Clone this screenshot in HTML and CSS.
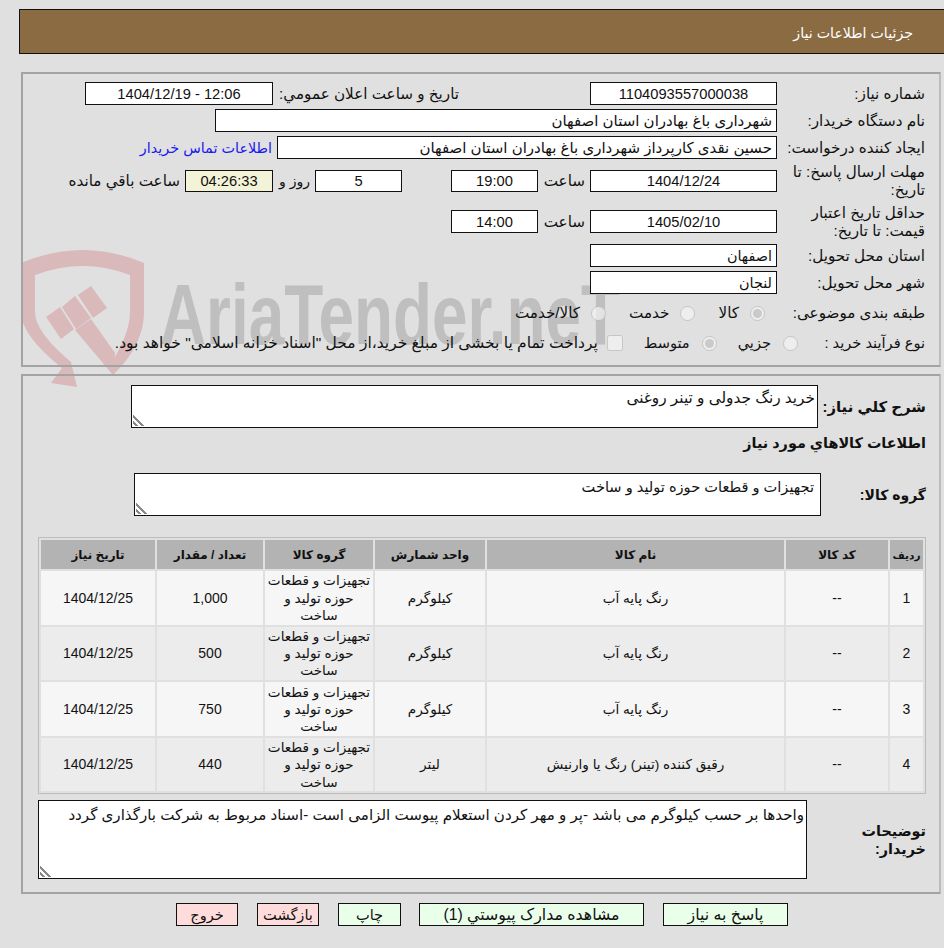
FILE: index.html
```html
<!DOCTYPE html>
<html lang="fa" dir="rtl">
<head>
<meta charset="utf-8">
<title>جزئیات اطلاعات نیاز</title>
<link rel="stylesheet" href="styles.css">
</head>
<body>
<svg class="watermark" width="944" height="400" viewBox="0 0 944 400" aria-hidden="true">
  <g class="wm-shield">
    <path d="M21 263Q83 237 144 263V312Q144 345 113 375L108 368Q130 335 130 312V275Q83 257 35 275V312Q35 332 71 362L77 387L51 383L62 368Q21 335 21 312Z"/>
    <path d="M75 330L91 319L115 353L113 375Z"/>
    <path d="M46 317L60 307L74 329L61 339Z"/>
    <path d="M62 307L75 296L91 318L76 329Z"/>
    <path d="M78 295L91 286L107 308L93 318Z"/>
  </g>
  <text class="wm-text" x="160" y="344" textLength="460" lengthAdjust="spacingAndGlyphs" direction="ltr">AriaTender.neT</text>
</svg>

<header class="page-title">جزئیات اطلاعات نیاز</header>

<section class="panel panel-info">
  <div class="row">
    <label class="lbl">شماره نیاز:</label>
    <input class="field f187 center num" readonly value="1104093557000038">
    <span class="lbl-inline announce">تاریخ و ساعت اعلان عمومي:</span>
    <input class="field f188 center num" dir="ltr" readonly value="1404/12/19 - 12:06">
  </div>
  <div class="row">
    <label class="lbl">نام دستگاه خریدار:</label>
    <input class="field f562" readonly value="شهرداری باغ بهادران استان اصفهان">
  </div>
  <div class="row">
    <label class="lbl">ایجاد کننده درخواست:</label>
    <input class="field f500" readonly value="حسین نقدی کارپرداز شهرداری باغ بهادران استان اصفهان">
    <a class="contact" href="#">اطلاعات تماس خریدار</a>
  </div>
  <div class="row row-tall first">
    <label class="lbl">مهلت ارسال پاسخ: تا تاریخ:</label>
    <input class="field f187 center short num" readonly value="1404/12/24">
    <span class="lbl-inline hour">ساعت</span>
    <input class="field f87 center short num" readonly value="19:00">
    <input class="field f87 center short days num" readonly value="5">
    <span class="lbl-inline dayword">روز و</span>
    <input class="field timer center short num" readonly value="04:26:33">
    <span class="lbl-inline remain">ساعت باقي مانده</span>
  </div>
  <div class="row row-tall">
    <label class="lbl">حداقل تاریخ اعتبار قیمت: تا تاریخ:</label>
    <input class="field f187 center num" readonly value="1405/02/10">
    <span class="lbl-inline hour">ساعت</span>
    <input class="field f87 center num" readonly value="14:00">
  </div>
  <div class="row">
    <label class="lbl">استان محل تحویل:</label>
    <input class="field f187 place" readonly value="اصفهان">
  </div>
  <div class="row">
    <label class="lbl">شهر محل تحویل:</label>
    <input class="field f187 place" readonly value="لنجان">
  </div>
  <div class="row row-opt cat">
    <label class="lbl">طبقه بندی موضوعی:</label>
    <input class="radio" type="radio" name="cat" disabled checked>
    <span class="opt">کالا</span>
    <input class="radio" type="radio" name="cat" disabled>
    <span class="opt">خدمت</span>
    <input class="radio" type="radio" name="cat" disabled>
    <span class="opt">کالا/خدمت</span>
  </div>
  <div class="row row-opt proc">
    <label class="lbl">نوع فرآیند خرید :</label>
    <input class="radio" type="radio" name="proc" disabled>
    <span class="opt">جزیي</span>
    <input class="radio" type="radio" name="proc" disabled checked>
    <span class="opt">متوسط</span>
    <input class="check" type="checkbox" disabled>
    <span class="opt pay">پرداخت تمام یا بخشی از مبلغ خرید،از محل "اسناد خزانه اسلامی" خواهد بود.</span>
  </div>
</section>

<section class="panel panel-goods">
  <div class="desc-row">
    <h3 class="head head-desc">شرح کلي نیاز:</h3>
    <textarea class="area area-desc" readonly>خرید رنگ جدولی و تینر روغنی</textarea>
  </div>
  <h3 class="head head-goods">اطلاعات کالاهاي مورد نیاز</h3>
  <div class="group-row">
    <h3 class="head head-group">گروه کالا:</h3>
    <textarea class="area area-group" readonly>تجهیزات و قطعات حوزه تولید و ساخت</textarea>
  </div>
  <table class="goods">
    <colgroup>
      <col class="c1"><col class="c2"><col class="c3"><col class="c4"><col class="c5"><col class="c6"><col class="c7">
    </colgroup>
    <thead>
      <tr><th>ردیف</th><th>کد کالا</th><th>نام کالا</th><th>واحد شمارش</th><th>گروه کالا</th><th>تعداد / مقدار</th><th>تاریخ نیاز</th></tr>
    </thead>
    <tbody>
      <tr><td>1</td><td>--</td><td>رنگ پایه آب</td><td>کیلوگرم</td><td>تجهیزات و قطعات حوزه تولید و ساخت</td><td>1,000</td><td>1404/12/25</td></tr>
      <tr><td>2</td><td>--</td><td>رنگ پایه آب</td><td>کیلوگرم</td><td>تجهیزات و قطعات حوزه تولید و ساخت</td><td>500</td><td>1404/12/25</td></tr>
      <tr><td>3</td><td>--</td><td>رنگ پایه آب</td><td>کیلوگرم</td><td>تجهیزات و قطعات حوزه تولید و ساخت</td><td>750</td><td>1404/12/25</td></tr>
      <tr><td>4</td><td>--</td><td>رقیق کننده (تینر) رنگ یا وارنیش</td><td>لیتر</td><td>تجهیزات و قطعات حوزه تولید و ساخت</td><td>440</td><td>1404/12/25</td></tr>
    </tbody>
  </table>
  <div class="notes-row">
    <h3 class="head head-notes">توضیحات خریدار:</h3>
    <textarea class="area area-notes" readonly>واحدها بر حسب کیلوگرم می باشد -پر و مهر کردن استعلام پیوست الزامی است -اسناد مربوط به شرکت بارگذاری گردد</textarea>
  </div>
</section>

<nav class="actions">
  <button class="btn ok b-reply">پاسخ به نیاز</button>
  <button class="btn ok b-docs">مشاهده مدارک پیوستي (1)</button>
  <button class="btn ok b-print">چاپ</button>
  <button class="btn no b-back">بازگشت</button>
  <button class="btn no b-exit">خروج</button>
</nav>
</body>
</html>
```
FILE: styles.css
```css
* { box-sizing: border-box; }
html, body { height: 948px; overflow: hidden; }
body {
  margin: 0;
  position: relative;
  background: #e0e0e0;
  color: #111;
  font: 15.2px/18px "Liberation Sans", "DejaVu Sans", sans-serif;
}
.watermark { position: absolute; top: 0; left: 0; z-index: 0; pointer-events: none; }
.wm-shield { fill: #d9b9ba; }
.wm-text { fill: #bfbfbf; font: bold 86px "Liberation Sans", sans-serif; }

.page-title {
  height: 45px;
  margin: 9px -2px 0 19px;
  padding: 0 32px 0 0;
  background: #8b6b42;
  border: 1px solid #111;
  color: #fff;
  font-size: 14.2px;
  line-height: 46px;
}
.panel {
  position: relative;
  z-index: 1;
  margin: 0 3px 0 21px;
  border: 2px solid;
  border-color: #a3a3a3 #bcbcbc #a3a3a3 #a3a3a3;
}
.panel-info { height: 295px; margin-top: 18px; padding: 8px 14px 0 0; }
.panel-goods { height: 520px; margin-top: 7px; padding: 9px 13px 0 15px; }

.row { display: flex; align-items: center; height: 23px; margin-bottom: 4px; }
.row-tall { height: 37px; }
.row-tall.first { height: 36px; }
.row-opt { height: 30px; margin-bottom: 0; }
.lbl { flex: none; width: 148px; padding-left: 8px; }
.row-opt.proc .lbl { width: 127px; }
.field {
  flex: none;
  height: 23px;
  padding: 0 4px;
  border: 1px solid #111;
  border-radius: 0;
  outline: 0;
  background: #fff;
  color: #111;
  font: inherit;
  font-size: 15px;
}
.num { font-size: 14.7px; }
.place { font-size: 14.4px; }
.center { text-align: center; }
.short { height: 22px; }
.f187 { width: 187px; }
.f188 { width: 188px; }
.f87 { width: 87px; }
.f562 { width: 562px; }
.f500 { width: 500px; }
.lbl-inline { flex: none; }
.announce { margin: 0 131px 0 0; width: 186px; }
.hour { width: 47px; margin-right: 5px; }
.days { margin-right: 49px; }
.dayword { width: 42px; margin-right: 0; padding-right: 5px; font-size: 14px; }
.timer { width: 88px; background: #f3f3d8; }
.remain { margin-right: 5px; }
.contact { flex: none; margin-right: 5px; color: #1a1aee; font-size: 14.4px; text-decoration: none; }

.radio { flex: none; width: 15px; height: 15px; margin: 0 0 0 11px; }
.check { flex: none; width: 16px; height: 16px; margin: 0 0 0 9px; }
.opt { flex: none; }
.cat .lbl { margin-left: 12px; width: 148px; }
.cat .opt { margin-left: 23px; }
.proc .lbl { font-size: 14.6px; }
.proc .opt { margin-left: 21px; font-size: 14.6px; }
.proc .radio { margin-left: 12px; }
.proc .opt.pay { margin-left: 0; font-size: 15.5px; }

.head { margin: 0; font-size: 14.4px; font-weight: bold; line-height: 18px; flex: none; }
.desc-row, .group-row, .notes-row { display: flex; align-items: center; }
.area {
  display: block;
  flex: none;
  padding: 3px 2px 2px;
  border: 1px solid #111;
  border-radius: 0;
  outline: 0;
  background: #fff;
  color: #111;
  font: inherit;
}
.area::-webkit-resizer {
  background: linear-gradient(45deg, transparent 0 12%, #888 12% 24%, transparent 24% 40%, #888 40% 52%, transparent 52%) left 1px bottom 1px / 11px 11px no-repeat;
}
.head-desc { width: 108px; font-size: 14.9px; }
.area-desc { width: 687px; height: 43px; font-size: 15.3px; }
.head-goods { margin-top: 6px; }
.group-row { margin-top: 21px; }
.head-group { width: 105px; font-size: 14px; }
.area-group { width: 687px; height: 43px; padding: 4px 6px 2px; font-size: 14.6px; }

.goods {
  width: 888px;
  margin: 21px 0 0 0;
  table-layout: fixed;
  border: 1px solid #bbb;
  border-spacing: 2px;
  border-collapse: separate;
  text-align: center;
  font-size: 13.6px;
}
.c1 { width: 33px; } .c2 { width: 102px; } .c3 { width: 297px; } .c4 { width: 110px; }
.c5 { width: 108px; } .c6 { width: 106px; } .c7 { width: 114px; }
.goods th { height: 29px; padding: 1px 0 0; background: #b3b3b3; font-size: 12px; }
.goods th:first-child { font-size: 10.5px; }
.goods td { height: 53.6px; padding: 1px 0 0; line-height: 17.2px; }
.goods td:nth-child(1), .goods td:nth-child(2), .goods td:nth-child(6), .goods td:nth-child(7) { font-size: 14px; }
.goods tbody tr:nth-child(odd) td { background: #f6f6f6; }
.goods tbody tr:nth-child(even) td { background: #ececec; }

.notes-row { margin-top: 6px; }
.head-notes { width: 119px; }
.area-notes { width: 769px; height: 79px; padding-top: 5px; font-size: 15.1px; }

.actions {
  position: relative;
  z-index: 1;
  display: flex;
  margin: 9px 156px 0 0;
}
.btn {
  flex: none;
  height: 23px;
  padding: 0;
  margin-left: 19px;
  border: 1px solid #111;
  border-radius: 0;
  color: #111;
  font: inherit;
  font-size: 14.6px;
}
.ok { background: #eaffea; }
.no { background: #ffdcdc; }
.b-reply { width: 125px; font-size: 15.8px; }
.b-docs { width: 225px; margin-left: 18px; font-size: 15.8px; }
.b-print { width: 63px; }
.b-back { width: 62px; }
.b-exit { width: 62px; margin-left: 0; }
```
